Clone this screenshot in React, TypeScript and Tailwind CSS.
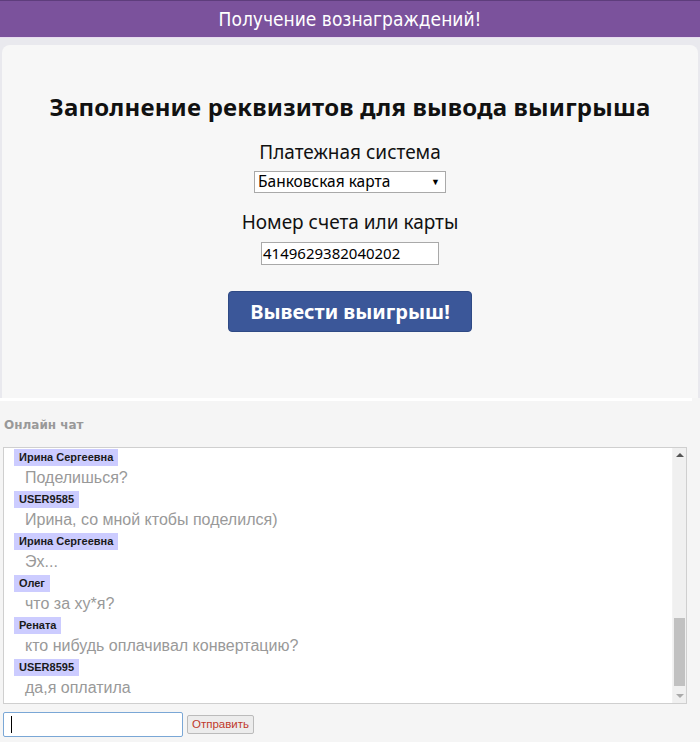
import React from "react";

const msgs = [
  { n: "Ирина Сергеевна", t: "Поделишься?" },
  { n: "USER9585", t: "Ирина, со мной ктобы поделился)" },
  { n: "Ирина Сергеевна", t: "Эх..." },
  { n: "Олег", t: "что за ху*я?" },
  { n: "Рената", t: "кто нибудь оплачивал конвертацию?" },
  { n: "USER8595", t: "да,я оплатила" },
];

export default function App() {
  return (
    <div className="w-[700px] h-[742px] overflow-hidden bg-[#f5f5f5]" style={{ fontFamily: '"Liberation Sans", Arial, sans-serif' }}>
      <div className="h-[37px] bg-[#7b529c] border-t border-[#5e3d7c] flex items-center justify-center text-white text-[19px]" style={{ fontFamily: '"Liberation Sans Narrow", "DejaVu Sans Condensed", "Liberation Sans", sans-serif' }}>
        Получение вознаграждений!
      </div>
      <div className="h-px bg-[#e8dcf0]" />
      <div className="bg-[#e9e9ee] pt-[7px]">
        <div className="mx-[2px] bg-[#f7f7f7] rounded-t-[8px] h-[353px] flex flex-col items-center pt-[48px]" style={{ fontFamily: '"Noto Sans", "Open Sans", sans-serif' }}>
          <div className="text-[24px] font-bold text-[#111] leading-[28px] tracking-[0.2px]">Заполнение реквизитов для вывода выигрыша</div>
          <div className="text-[19px] text-[#111] leading-[24px] mt-[19px]">Платежная система</div>
          <div className="mt-[7px] w-[192px] h-[22px] bg-white border border-[#a9a9a9] flex items-center justify-between pl-[3px] pr-[5px] text-[15.5px] text-black">
            <span>Банковская карта</span>
            <span className="text-[9px]">▼</span>
          </div>
          <div className="text-[19px] text-[#111] leading-[24px] mt-[17px]">Номер счета или карты</div>
          <div className="mt-[8px] w-[178px] h-[23px] bg-white border border-[#a9a9a9] flex items-center pl-[1px] text-[15px] text-black">
            4149629382040202
          </div>
          <div className="mt-[26px] w-[244px] h-[41px] bg-[#3b5799] border border-[#2f4a85] rounded-[4px] flex items-center justify-center text-white text-[20px] font-bold">
            Вывести выигрыш!
          </div>
        </div>
      </div>
      <div className="h-[3px] bg-white w-[692px]" />
      <div className="pl-[4px] pt-[17px] text-[12px] font-bold text-[#999] leading-[14px]" style={{ fontFamily: '"DejaVu Sans", Verdana, sans-serif' }}>Онлайн чат</div>
      <div className="ml-[3px] mt-[15px] w-[684px] h-[257px] bg-white border border-[#cfcfcf] flex">
        <div className="flex-1 pl-[10px] pt-[1px] flex flex-col">
          {msgs.map((m, i) => (
            <div key={i} className="h-[42px] flex flex-col items-start">
              <div className="bg-[#ccccff] px-[5px] h-[17px] leading-[17px] text-[11px] font-bold text-[#1a1a1a]">{m.n}</div>
              <div className="pl-[11px] pt-[2px] text-[16px] leading-[20px] text-[#999]">{m.t}</div>
            </div>
          ))}
        </div>
        <div className="w-[14px] bg-[#f0f0f0] flex flex-col items-center justify-between py-[5px] border-l border-[#f3f3f3]">
          <div className="w-0 h-0 border-l-[4px] border-r-[4px] border-b-[4px] border-l-transparent border-r-transparent border-b-[#555]" />
          <div className="flex-1" />
          <div className="w-[11px] h-[68px] bg-[#c1c1c1] mb-[8px]" />
          <div className="w-0 h-0 border-l-[4px] border-r-[4px] border-t-[4px] border-l-transparent border-r-transparent border-t-[#aaa]" />
        </div>
      </div>
      <div className="flex items-center ml-[3px] mt-[8px] gap-[4px]">
        <div className="w-[180px] h-[25px] bg-white border border-[#7aa7d6] rounded-[2px] flex items-center pl-[7px]">
          <div className="w-px h-[17px] bg-black" />
        </div>
        <div className="h-[19px] px-[4px] bg-[#ececec] border border-[#bbb] rounded-[2px] text-[11.5px] text-[#c0392b] flex items-center">Отправить</div>
      </div>
    </div>
  );
}
